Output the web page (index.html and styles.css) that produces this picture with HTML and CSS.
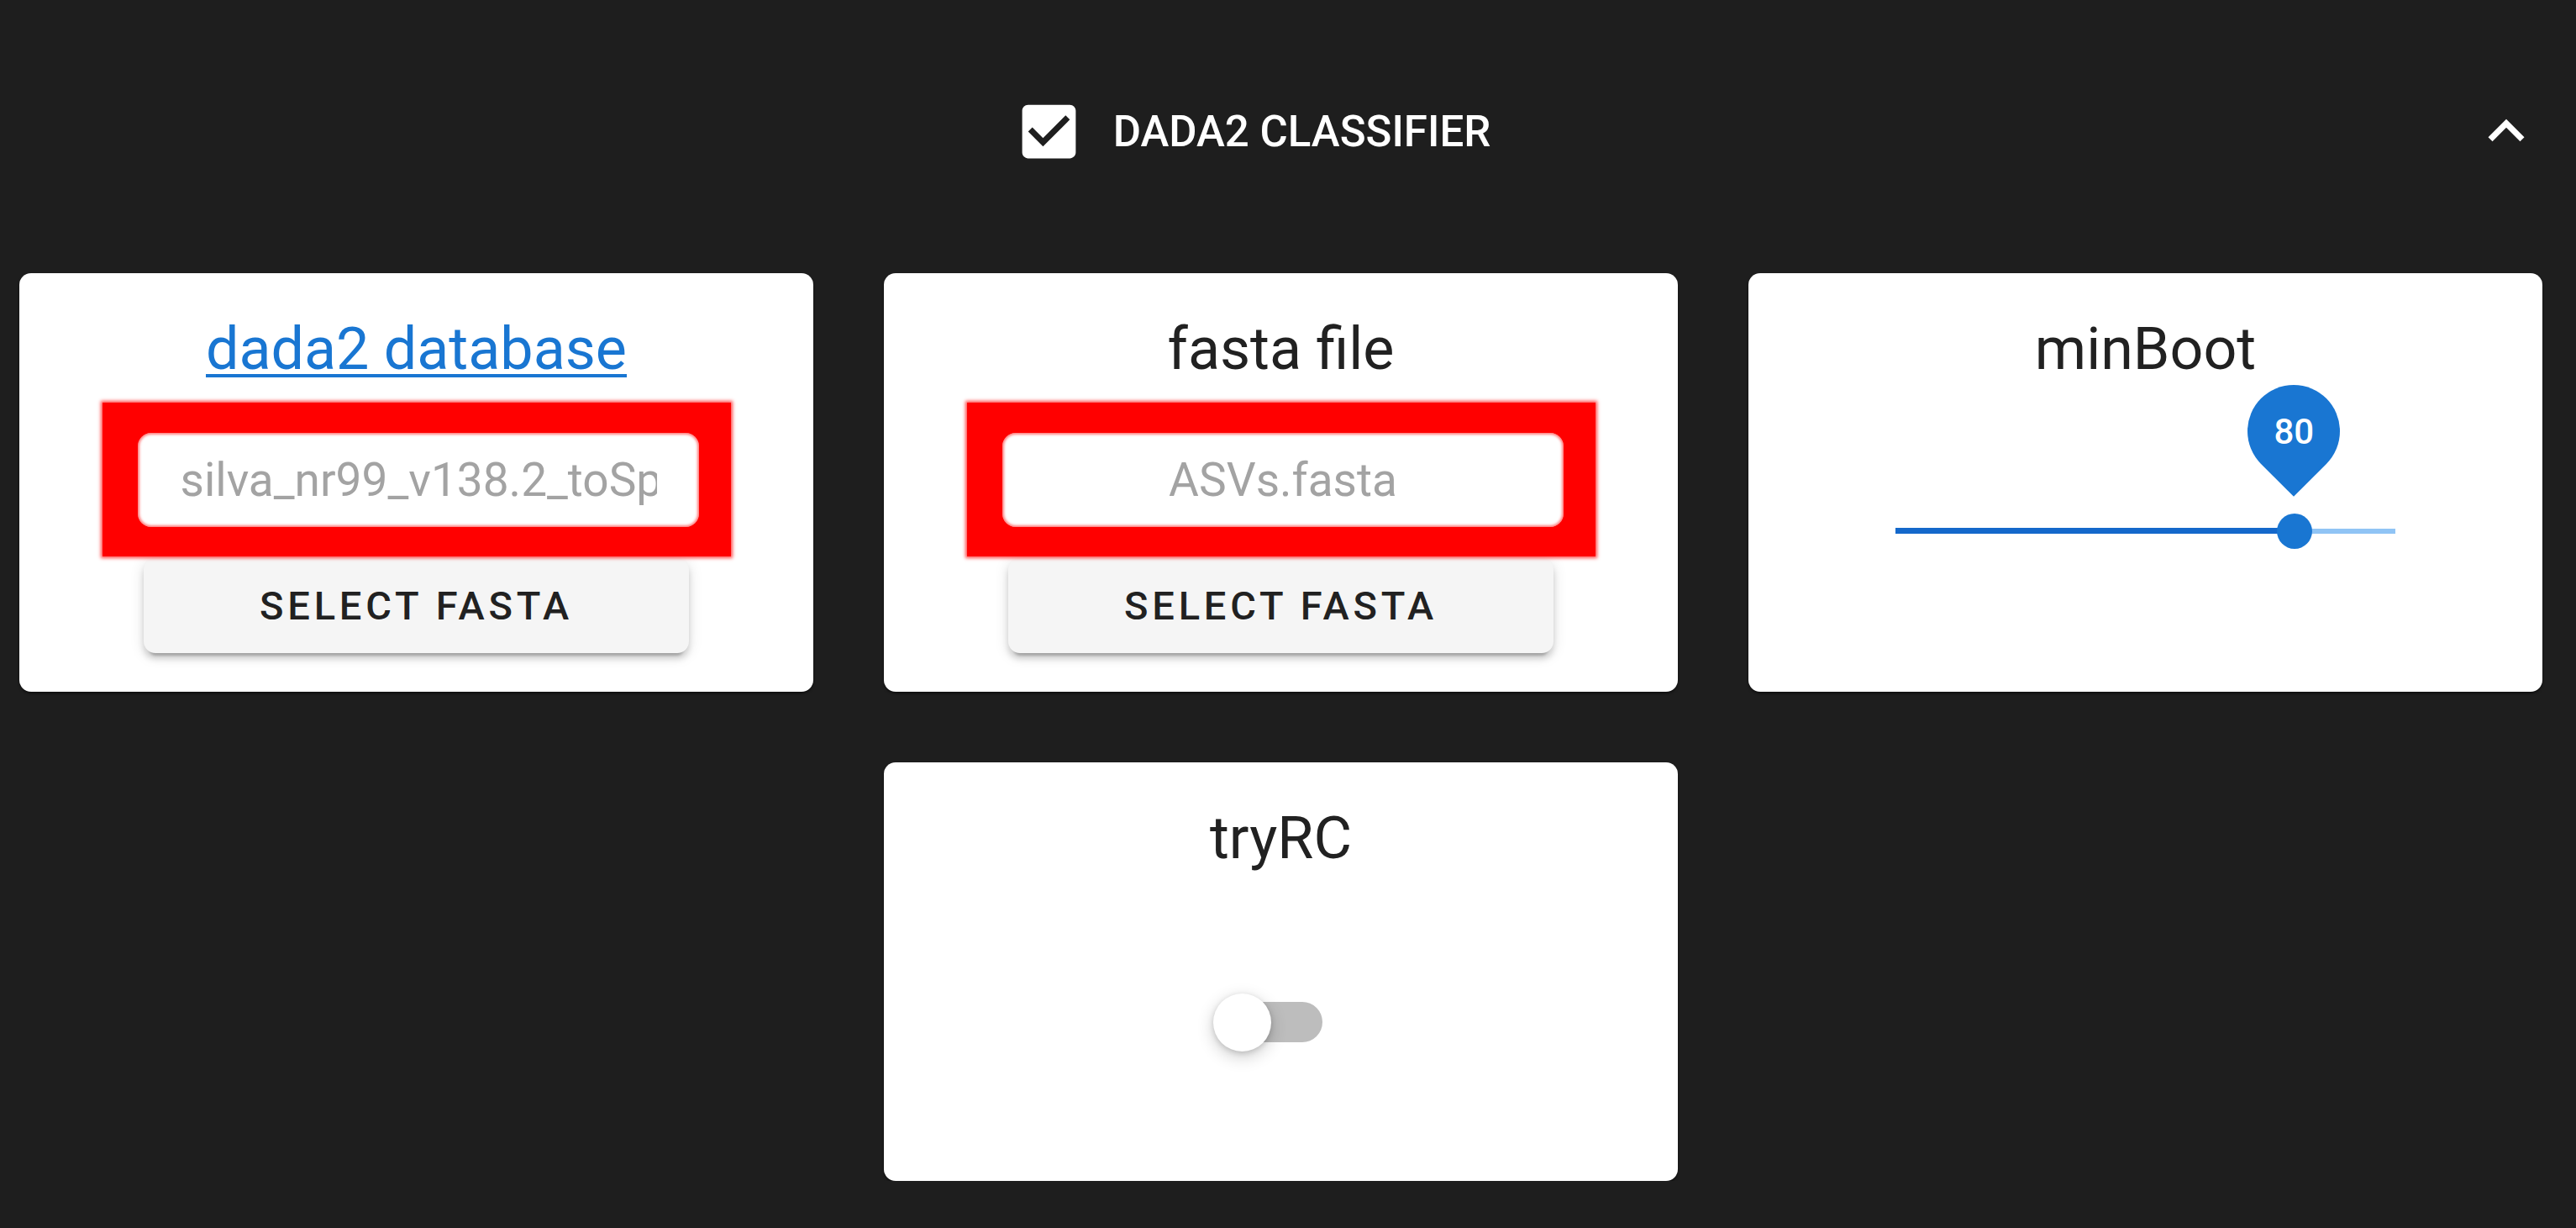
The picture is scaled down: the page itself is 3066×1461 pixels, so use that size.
FILE: index.html
```html
<!DOCTYPE html>
<html>
<head>
  <meta charset="UTF-8">
  <title>DADA2 classifier</title>
  <link rel="stylesheet" href="styles.css">
</head>
<body>

  <div class="panel">
    <div class="summary">
      <div class="summary-content">
        <svg class="checkbox" viewBox="0 0 24 24"><path d="M19 3H5c-1.11 0-2 .9-2 2v14c0 1.1.89 2 2 2h14c1.11 0 2-.9 2-2V5c0-1.1-.89-2-2-2zm-9 14l-5-5 1.41-1.41L10 14.17l7.59-7.59L19 8l-9 9z"/></svg>
        <span class="summary-title">DADA2 CLASSIFIER</span>
      </div>
      <svg class="expand" viewBox="0 0 24 24"><path d="M12 8l-6 6 1.41 1.41L12 10.83l4.59 4.58L18 14z"/></svg>
    </div>

    <div class="params">
      <div class="card">
        <a class="card-title link" href="#">dada2 database</a>
        <div class="file-field">
          <div class="highlight">
            <input class="file-name" readonly value="silva_nr99_v138.2_toSpecies_trainset.fa.gz">
          </div>
          <button class="select-btn">Select fasta</button>
        </div>
      </div>

      <div class="card">
        <div class="card-title">fasta file</div>
        <div class="file-field">
          <div class="highlight">
            <input class="file-name" readonly value="ASVs.fasta">
          </div>
          <button class="select-btn">Select fasta</button>
        </div>
      </div>

      <div class="card">
        <div class="card-title">minBoot</div>
        <div class="slider">
          <span class="rail"></span>
          <span class="track" style="width: 80%"></span>
          <span class="value-label" style="left: 80%"><span>80</span></span>
          <span class="thumb" style="left: 80%"></span>
        </div>
      </div>

      <div class="card card-center">
        <div class="card-title">tryRC</div>
        <div class="switch">
          <span class="switch-track"></span>
          <span class="switch-thumb"></span>
        </div>
      </div>
    </div>
  </div>

</body>
</html>
```

FILE: styles.css
```css
body {
  background-color: #1e1e1e;
  font-family: Roboto, 'Liberation Sans', sans-serif;
  margin: 0;
  padding: 0;
}

.summary {
  display: flex;
  align-items: center;
  height: 312px;
  padding: 0 40px 0 23px;
}

.summary-content {
  flex: 1;
  display: flex;
  align-items: center;
  justify-content: center;
  gap: 34px;
  padding-left: 17px;
}

.checkbox {
  width: 85px;
  height: 85px;
  fill: #fff;
}

.summary-title {
  color: #fff;
  font-size: 51px;
  font-weight: 500;
}

.expand {
  width: 86px;
  height: 86px;
  fill: #fff;
}

.params {
  display: grid;
  grid-template-columns: repeat(3, 1fr);
  gap: 84px;
  padding: 13px 40px 0 23px;
}

.card {
  background-color: #fff;
  border-radius: 14px;
  height: 498px;
  box-sizing: border-box;
  padding-top: 50px;
  display: flex;
  flex-direction: column;
  align-items: center;
  box-shadow: 0 2px 3px rgba(0,0,0,0.5);
}

.card-center {
  grid-column: 2;
}

.card-title {
  font-size: 70px;
  line-height: 80px;
  color: #212121;
}

.link {
  color: #1976d2;
  text-decoration: underline;
  text-decoration-thickness: 4px;
  text-underline-offset: 6px;
}

.file-field {
  margin-top: 24px;
  display: flex;
  flex-direction: column;
  align-items: center;
}

.highlight {
  position: relative;
  z-index: 1;
  background-color: #ff0000;
  padding: 36px 38px 35px 42px;
  box-shadow: 0 0 4px 2px rgba(255,0,0,0.7);
}

.file-name {
  display: block;
  width: 668px;
  height: 112px;
  box-sizing: border-box;
  border: none;
  border-radius: 16px;
  padding: 0 50px 0 51px;
  background-color: #fff;
  box-shadow: inset 0 0 3px 2px rgba(255,0,0,0.5);
  font-family: Roboto, 'Liberation Sans', sans-serif;
  font-size: 55px;
  color: #a3a3a3;
  text-align: center;
  outline: none;
}

.select-btn {
  margin-top: 2px;
  width: 649px;
  height: 113px;
  border: none;
  border-radius: 14px;
  background-color: #f5f5f5;
  color: #212121;
  font-family: Roboto, 'Liberation Sans', sans-serif;
  font-size: 47px;
  font-weight: 500;
  letter-spacing: 4.8px;
  text-transform: uppercase;
  box-shadow: 0 10px 3px -7px rgba(0,0,0,0.2), 0 7px 7px 0 rgba(0,0,0,0.14), 0 3px 17px 0 rgba(0,0,0,0.12);
}

.slider {
  position: relative;
  width: 595px;
  height: 42px;
  margin-top: 156px;
}

.rail {
  position: absolute;
  left: 0;
  right: 0;
  top: 18px;
  height: 6px;
  background-color: #90c4f5;
}

.track {
  position: absolute;
  left: 0;
  top: 17px;
  height: 7px;
  background-color: #1468cb;
}

.thumb {
  position: absolute;
  top: 0;
  width: 42px;
  height: 42px;
  margin-left: -22px;
  border-radius: 50%;
  background-color: #1976d2;
}

.value-label {
  position: absolute;
  top: -153px;
  width: 110px;
  height: 110px;
  margin-left: -57px;
  border-radius: 50% 50% 50% 0;
  background-color: #1976d2;
  transform: rotate(-45deg);
  display: flex;
  align-items: center;
  justify-content: center;
}

.value-label span {
  transform: rotate(45deg);
  color: #fff;
  font-size: 42px;
  font-weight: 500;
}

.switch {
  position: relative;
  width: 130px;
  height: 69px;
  margin-top: 145px;
  margin-right: 32px;
}

.switch-track {
  position: absolute;
  left: 13px;
  top: 10px;
  width: 117px;
  height: 48px;
  border-radius: 24px;
  background-color: #bdbdbd;
}

.switch-thumb {
  position: absolute;
  left: 0;
  top: 0;
  width: 69px;
  height: 69px;
  border-radius: 50%;
  background-color: #fff;
  box-shadow: 0 6px 20px rgba(0,0,0,0.2), 0 2px 6px rgba(0,0,0,0.15);
}
```
